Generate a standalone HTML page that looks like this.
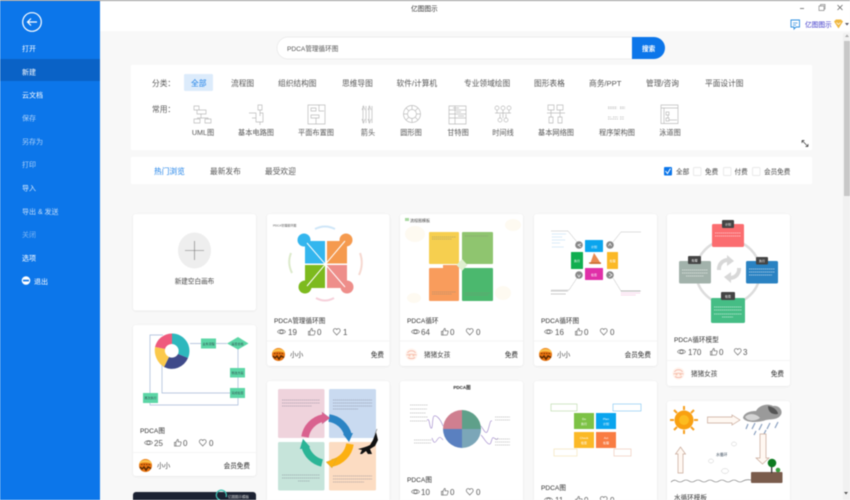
<!DOCTYPE html>
<html lang="zh"><head><meta charset="utf-8"><title>亿图图示</title>
<style>
html,body{margin:0;padding:0;width:850px;height:500px;overflow:hidden;background:#f8f8f8}
svg{display:block;position:absolute;left:0;top:0;filter:blur(.4px)}
text{font-family:"Liberation Sans","Noto Sans CJK SC",sans-serif;fill:#444;font-size:7.7px}
.s{fill:#fff;font-size:7px}.d{fill:#fff;fill-opacity:.65;font-size:7px}
.c{font-size:7.7px;fill:#555}.m{text-anchor:middle}.i{font-size:7.2px;fill:#555;text-anchor:middle}
.k{font-size:6.6px;fill:#444}.t{font-size:6.6px;fill:#333}.n{font-size:8px;fill:#555}
.f{font-size:6.6px;fill:#444}.r{font-size:6.6px;fill:#222;text-anchor:end}
.l{fill:none;stroke:#bbb;stroke-width:.7}.x{fill:#fff;font-size:3px;text-anchor:middle}
.g{fill:none;stroke:#666;stroke-width:.7}
</style></head><body>
<svg width="850" height="500" viewBox="0 0 850 500" xmlns="http://www.w3.org/2000/svg">
<defs>
<filter id="sh" x="-5%" y="-5%" width="110%" height="110%"><feDropShadow dx="0" dy=".5" stdDeviation="1" flood-color="#000" flood-opacity=".08"/></filter>
<symbol id="eye" viewBox="0 0 10 8" overflow="visible"><path class="g" d="M.5 4C2.5 1 7.5 1 9.5 4C7.5 7 2.5 7 .5 4Z"/><circle class="g" cx="5" cy="4" r="1.8"/></symbol>
<symbol id="th" viewBox="0 0 8 8" overflow="visible"><path class="g" d="M.5 3.5H2V7.5H.5ZM2 3.5L3.7.5C4.6.5 4.8 1.3 4.6 2.1L4.3 3H7C7.6 3 7.8 3.5 7.6 4L6.8 7C6.7 7.3 6.5 7.5 6.2 7.5H2"/></symbol>
<symbol id="he" viewBox="0 0 8 8" overflow="visible"><path class="g" d="M4 7.5L.9 4.2C-.4 2.7.6.6 2.2.6C3 .6 3.6 1 4 1.7C4.4 1 5 .6 5.8.6C7.4.6 8.4 2.7 7.1 4.2Z"/></symbol>
<symbol id="av1" viewBox="0 0 13 13"><circle cx="6.5" cy="6.5" r="6.5" fill="#e8730f"/><path d="M0 5C3 3 9 3 13 5L12 2.5Q6.5-1 1 2.5Z" fill="#fbc04a"/><path d="M1 8L3 10 5 8 7 11 9 8 12 9.5" stroke="#5a2a05" stroke-width="1.5" fill="none"/><path d="M2 5.5H11" stroke="#7a3505" stroke-width="1" stroke-dasharray="1.5 1"/></symbol>
<symbol id="av2" viewBox="0 0 13 13"><circle cx="6.5" cy="6.5" r="6" fill="#fff3ec"/><path d="M2.5 5C4 2 9 2 10.5 5M1.5 7C4 6 9 6 11.500 7M3 9.500C5 11 8 11 10 9.500" fill="none" stroke="#f4b0a0" stroke-width=".8"/><circle cx="4.500" cy="7.500" r="1" fill="#f8c8b0"/><circle cx="8.500" cy="7.500" r="1" fill="#f8c8b0"/></symbol>
</defs>

<rect width="850" height="500" fill="#f8f8f8"/>
<rect x="0" y="0" width="850" height="31" fill="#fff"/>
<rect x="0" y="0" width="850" height="1" fill="#999"/>
<text x="411" y="11" style="font-size:6.700px;fill:#333">亿图图示</text>
<path d="M800 8.500H804" stroke="#666" stroke-width=".8"/>
<path d="M819 6H824V10.500H819ZM820.500 6V4.500H825V9H824" fill="none" stroke="#888" stroke-width=".7"/>
<path d="M837.500 5L842.500 10M842.500 5L837.500 10" stroke="#666" stroke-width=".8"/>
<path d="M791 20H799.500V27H796L794 29V27H791Z" fill="none" stroke="#2e8fe0" stroke-width=".9"/><path d="M793 23H797.500M793 25H796" stroke="#2e8fe0" stroke-width=".7"/>
<text x="805" y="27" style="font-size:6.700px;fill:#3a35c8">亿图图示</text>
<path d="M834 21.500L836 19.500H841L843 21.500 838.500 28.500Z" fill="#f0b840"/><path d="M836.500 22.500L838.500 24.500 840.500 22.500" fill="none" stroke="#fff" stroke-width=".7"/>
<path d="M845 23H849L847 25.500Z" fill="#556"/>

<!-- sidebar -->
<rect x="0" y="0" width="100" height="500" fill="#0c76ea"/>
<rect x="0" y="0" width="100" height="1" fill="#999"/>
<rect x="0" y="59" width="100" height="22" fill="#0a62c6"/>
<circle cx="32" cy="22" r="9.300" fill="none" stroke="#fff" stroke-width="1.200"/>
<path d="M37 22H27.500M31 18.500L27.500 22 31 25.500" fill="none" stroke="#fff" stroke-width="1.200"/>
<text class="s" x="22" y="51">打开</text>
<text class="s" x="22" y="74.500">新建</text>
<text class="s" x="22" y="97.500">云文档</text>
<text class="d" x="22" y="120.500">保存</text>
<text class="d" x="22" y="144">另存为</text>
<text class="d" x="22" y="167">打印</text>
<text class="s" x="22" y="190.500" style="fill-opacity:.85">导入</text>
<text class="d" x="22" y="214" style="fill-opacity:.75">导出 &amp; 发送</text>
<text class="d" x="22" y="237" style="fill-opacity:.45">关闭</text>
<text class="s" x="22" y="260.500">选项</text>
<circle cx="26" cy="280.500" r="4.300" fill="#fff"/><rect x="23" y="279.700" width="6" height="1.700" fill="#0c76ea"/>
<text class="s" x="34" y="284">退出</text>

<!-- search -->
<path d="M288 37H632V59H288A11 11 0 0 1 288 37Z" fill="#fff" stroke="#e8e8e8" stroke-width=".7"/>
<path d="M632 37H654A11 11 0 0 1 654 59H632Z" fill="#0c76ea"/>
<text x="642" y="51" style="font-size:6.600px;fill:#fff;font-weight:bold">搜索</text>
<text x="287" y="51" style="font-size:6.600px;fill:#555">PDCA管理循环图</text>

<!-- filter panel -->
<rect x="131" y="65" width="681" height="85" fill="#fff"/>
<text class="c" x="152" y="86">分类：</text>
<rect x="184" y="74" width="29" height="17" rx="1.500" fill="#dcebfb"/>
<text class="c" x="191" y="86" style="fill:#1a7fe8">全部</text>
<text class="c" x="231" y="86">流程图</text>
<text class="c" x="278" y="86">组织结构图</text>
<text class="c" x="342" y="86">思维导图</text>
<text class="c" x="396.500" y="86">软件/计算机</text>
<text class="c" x="464" y="86">专业领域绘图</text>
<text class="c" x="534" y="86">图形表格</text>
<text class="c" x="589" y="86">商务/PPT</text>
<text class="c" x="646" y="86">管理/咨询</text>
<text class="c" x="705" y="86">平面设计图</text>
<text class="c" x="152" y="112">常用：</text>

<!-- icons -->
<g>
<path class="l" d="M194 106H199V110H194ZM197 110H206V114H197ZM201 114V118M194 119H200V123H194ZM205 119H211V123H205ZM197 118H208V119"/>
<path class="l" d="M258 105H262V110H258ZM260 110V116M249 113H256V122H263V113H260M256 118H252M260 122V125"/>
<path class="l" d="M308 105H325V124H308ZM311 108H316V111H311ZM311 115H319V118H311ZM319 105V111H324M316 118V124"/>
<path class="l" d="M363 106V123M366 106V123M369 106V123M372 106V123M362 110L363.500 106 365 110M368 110L369.500 106 371 110M362 119L363.500 123 365 119M368 119L369.500 123 371 119"/>
<circle class="l" cx="412" cy="114" r="8.500"/><circle class="l" cx="412" cy="114" r="4.500"/><path class="l" d="M412 105.500V109.500M412 118.500V122.500M403.500 114H407.500M416.500 114H420.500M406 108L409 111M415 117L418 120M418 108L415 111M409 117L406 120"/>
<path class="l" d="M449 106H466V124H449ZM449 110H466M449 114H466M449 118H466M455 106V124M453 108H459M456 112H461M458 116H464"/>
<circle class="l" cx="497" cy="108" r="2"/><circle class="l" cx="503" cy="108" r="2"/><circle class="l" cx="509" cy="108" r="2"/><circle class="l" cx="500" cy="120" r="2"/><circle class="l" cx="506" cy="120" r="2"/><path class="l" d="M495 113H511M497 110V113M503 110V118M509 110V113M500 118V114M506 118V114"/>
<path class="l" d="M548 105H554V110H548ZM557 105H563V110H557ZM551 110V113M560 110V113M547 113H565M551 113V117M560 113V117M549 117H553V123H549ZM558 117H562V123H558Z"/>
<path class="l" d="M608 107H617M608 108.500H617M620 107H625M620 108.500H625M608 117H611M613 117H618M620 117H624M608 119H618M620 119H624" stroke-dasharray="1.500 .7"/>
<path class="l" d="M661 105H678V123.500H661ZM661 108H678M664 108V123.500M666 112H669V115H666ZM666 118H669V121H666ZM669 120H677M668 115V118"/>
</g>
<text class="i" x="203" y="135">UML图</text>
<text class="i" x="256" y="135">基本电路图</text>
<text class="i" x="316" y="135">平面布置图</text>
<text class="i" x="368" y="135">箭头</text>
<text class="i" x="411" y="135">圆形图</text>
<text class="i" x="458" y="135">甘特图</text>
<text class="i" x="503" y="135">时间线</text>
<text class="i" x="556" y="135">基本网络图</text>
<text class="i" x="617" y="135">程序架构图</text>
<text class="i" x="670" y="135">泳道图</text>
<path d="M802 140.500L808 146.500M802 140.500V143M802 140.500H804.500M808 146.500V144M808 146.500H805.500" fill="none" stroke="#333" stroke-width=".7"/>

<!-- tabs panel -->
<rect x="131" y="157" width="681" height="27" fill="#fff"/>
<text class="c" x="154" y="174" style="fill:#1a7fe8">热门浏览</text>
<text class="c" x="210" y="174">最新发布</text>
<text class="c" x="265" y="174">最受欢迎</text>
<rect x="664" y="167" width="8" height="8.500" rx="1" fill="#0c76ea"/><path d="M665.500 171L667.500 173.500 670.500 168.500" fill="none" stroke="#fff" stroke-width="1"/>
<text class="k" x="676" y="174">全部</text>
<rect x="693.500" y="167.500" width="7.500" height="8" rx="1" fill="#fff" stroke="#e2e2e2" stroke-width=".7"/>
<text class="k" x="705" y="174">免费</text>
<rect x="723.500" y="167.500" width="7.500" height="8" rx="1" fill="#fff" stroke="#e2e2e2" stroke-width=".7"/>
<text class="k" x="734.500" y="174">付费</text>
<rect x="752.500" y="167.500" width="7.500" height="8" rx="1" fill="#fff" stroke="#e2e2e2" stroke-width=".7"/>
<text class="k" x="764" y="174">会员免费</text>

<!-- scrollbar -->
<rect x="843" y="33" width="7" height="467" fill="#f1f1f1"/>
<rect x="844" y="41" width="6" height="155" fill="#c8c8c8"/>
<path d="M845 37L847 34.500 849 37Z" fill="#aaa"/><path d="M844 492H848L846 494.500Z" fill="#555"/>

<!-- cards -->
<g filter="url(#sh)" fill="#fff">
<rect x="133" y="214" width="123" height="96.500" rx="3"/>
<rect x="133" y="325" width="123" height="151" rx="3"/>
<rect x="133" y="492" width="123" height="20" rx="3" fill="#1a2130"/>
<rect x="267" y="214" width="122.500" height="152" rx="3"/>
<rect x="267" y="381" width="122.500" height="130" rx="3"/>
<rect x="400" y="214" width="123" height="152" rx="3"/>
<rect x="400" y="381" width="123" height="130" rx="3"/>
<rect x="534" y="214" width="123" height="152" rx="3"/>
<rect x="534" y="381" width="123" height="130" rx="3"/>
<rect x="667" y="214" width="123" height="172" rx="3"/>
<rect x="667" y="401" width="123" height="110" rx="3"/>
</g>

<!-- new card -->
<ellipse cx="194.500" cy="250.500" rx="16.500" ry="18" fill="#eeeeee"/>
<path d="M185 250.500H204M194.500 241V260" stroke="#777" stroke-width=".6"/>
<text class="m" x="194.500" y="283.500" style="font-size:6.600px;fill:#444">新建空白画布</text>

<!-- dark card -->
<path d="M220 500A5 5 0 1 1 226 497" fill="none" stroke="#3fc0b0" stroke-width="1.300"/><text x="228" y="498" style="font-size:3.500px;fill:#ddd">亿图图示模板</text>

<!-- thumb 1 -->
<text x="273" y="226.500" style="font-size:3px;fill:#555">PDCA管理循环图</text>
<path d="M315 229Q325 224 335 229" fill="none" stroke="#cfe6f8" stroke-width="2"/>
<path d="M360 253Q364 264 359 275" fill="none" stroke="#f6d8d0" stroke-width="2"/>
<path d="M316 298Q325 303 334 298" fill="none" stroke="#f6d0da" stroke-width="2"/>
<path d="M291 253Q287 263 292 273" fill="none" stroke="#dceacb" stroke-width="2"/>
<rect x="305" y="241" width="20" height="22.500" fill="#34b6ee"/><circle cx="304" cy="240" r="6.500" fill="#34b6ee"/>
<rect x="327" y="241" width="20" height="22.500" fill="#f59a4e"/><circle cx="346" cy="240" r="6.500" fill="#f59a4e"/>
<rect x="305" y="265" width="20" height="23" fill="#7dba1e"/><circle cx="305" cy="287" r="6.500" fill="#7dba1e"/>
<rect x="327" y="265" width="20" height="23" fill="#ee8e8a"/><circle cx="347" cy="287" r="6.500" fill="#ee8e8a"/>
<path d="M307 243L345 287M345 241L307 286" stroke="#fff" stroke-width="1"/>
<text x="274" y="323" class="t">PDCA管理循环图</text>

<!-- thumb 2 -->
<text x="410" y="222" style="font-size:4px;fill:#444">流程图模板</text><rect x="405" y="218" width="4" height="3" fill="#a8d8a0"/>
<g fill="#fefaf1"><ellipse cx="415" cy="234" rx="10" ry="8"/><ellipse cx="513" cy="225" rx="8" ry="6"/><ellipse cx="503" cy="293" rx="8" ry="7"/><ellipse cx="414" cy="298" rx="7" ry="5"/></g>
<rect x="429" y="232" width="30" height="32" rx="1" fill="#f6cf4f"/>
<rect x="462" y="232" width="31" height="32" rx="1" fill="#8fc56f"/>
<rect x="429" y="268" width="30" height="33" rx="1" fill="#f99c5c"/><rect x="443" y="265" width="16" height="5" fill="#f99c5c"/>
<rect x="462" y="268" width="31" height="33" rx="1" fill="#4bb86e"/>
<path d="M462 259L467.500 265 462 271 456.500 265Z" fill="#dff0d0"/>
<path d="M432 237H456M432 239H452M465 236H488M432 292H456M432 294H452M465 293H490M465 295H488" stroke="#887" stroke-width=".4" stroke-dasharray="1.500 .5"/>
<text x="407" y="323" class="t">PDCA循环</text>

<!-- thumb 3 -->
<rect x="585" y="240" width="18" height="12" rx=".5" fill="#0aa5ee"/>
<rect x="571" y="252" width="12" height="17" rx=".5" fill="#10ae50"/>
<rect x="607" y="252" width="11" height="17" rx=".5" fill="#fbb927"/>
<rect x="585" y="268" width="18" height="12" rx=".5" fill="#e030a8"/>
<path d="M590 264L594 253 598 259 601 264Z" fill="#e98a50"/><path d="M589 263H601" stroke="#c06a30" stroke-width="1.200"/>
<g fill="#888"><circle cx="579" cy="245" r="3.800"/><circle cx="610" cy="245" r="3.800"/><circle cx="579" cy="275" r="3.800"/><circle cx="610" cy="275" r="3.800"/></g>
<path d="M581 244L578 245 581 247M608.500 246L610 243.500 611.500 246M577.500 274.500L579 277 580.500 274.500M609 273L612 275 609 277" fill="none" stroke="#fff" stroke-width=".7"/>
<path d="M577 242L568 231H551M613 242L621 232H641M577 278L569 290H551M613 278L621 291H641" fill="none" stroke="#aaa" stroke-width=".4"/>
<path d="M552 234H566M552 237H562M552 240H565M552 243H560M552 247H564" stroke="#90c4e8" stroke-width=".5" stroke-dasharray="1 .5"/>
<path d="M551 291H568M551 294H566M621 291H640" stroke="#666" stroke-width=".5" stroke-dasharray="1 .5"/><path d="M621 293H640M621 295H636" stroke="#eb90c8" stroke-width=".5" stroke-dasharray="1 .5"/>
<text x="594" y="248" class="x">计划</text><text x="577" y="262" class="x">执行</text><text x="612.500" y="262" class="x">处理</text><text x="594" y="276" class="x">检查</text>
<text x="541" y="323" class="t">PDCA循环图</text>

<!-- thumb 4 -->
<circle cx="728" cy="272" r="32" fill="none" stroke="#dcdcdc" stroke-width="2.500"/>
<rect x="712" y="224" width="32" height="23" rx="1.500" fill="#fb6d70"/>
<rect x="746" y="261" width="32" height="22.500" rx="1.500" fill="#2a82c2"/>
<rect x="711" y="298" width="34" height="25" rx="1.500" fill="#45bd85"/>
<rect x="679" y="261" width="32" height="22.500" rx="1.500" fill="#a2b2ab"/>
<g stroke="#fff" stroke-width=".5" stroke-dasharray="1.500 .5"><path d="M715 233H741M715 236H741"/><path d="M749 269H775M749 272H775M749 275H772"/><path d="M714 307H742M714 310H742M714 314H742M722 317H733"/><path d="M682 270H708M682 273H708M686 276H704"/></g>
<g fill="#444"><rect x="722" y="220" width="12" height="8" rx="1"/><rect x="756" y="257" width="12" height="7.500" rx="1"/><rect x="721" y="292" width="14" height="8" rx="1"/><rect x="688" y="256" width="13" height="8" rx="1"/></g>
<text class="x" x="728" y="225.500">计划</text><text class="x" x="762" y="262">执行</text><text class="x" x="728" y="297.500">检查</text><text class="x" x="694.500" y="261.500">处理</text>
<path d="M717 270A11 11 0 0 1 727 258L727 255 734 261 727 266 727 262A7 7 0 0 0 721 270ZM741 268A11 11 0 0 1 731 280L731 283 724 277 731 272 731 276A7 7 0 0 0 737 268Z" fill="#d8d8d8"/>
<text x="674" y="342" class="t">PDCA循环模型</text>

<!-- thumb 5: flow -->
<path d="M172 333.500A17.500 17.500 0 0 0 155 347L165 349A7 7 0 0 1 172 344Z" fill="#ef5a7d"/>
<path d="M172 333.500A17.500 17.500 0 0 1 188 358L178 354A7 7 0 0 0 172 344Z" fill="#2eb8bd"/>
<path d="M188 358A17.500 17.500 0 0 1 164 367L169 357A7 7 0 0 0 178 354Z" fill="#3f4a8a"/>
<path d="M155 347A20 20 0 0 0 164 367L169 357A7 7 0 0 1 165 349Z" fill="#fbc94b"/>
<path d="M190 343.500H201M216 343.500H227M238 349V368M238 377V388M230 393H162V365M150 393V335H163M150 403V405H238V398" fill="none" stroke="#a4b8d8" stroke-width=".7"/>
<g fill="#5cd6a6"><rect x="201" y="338.500" width="15" height="10"/><path d="M227 343.500L238 337 248.500 343.500 238 349.500Z"/><rect x="230" y="368" width="15" height="9.500"/><rect x="230" y="388" width="15" height="10"/><rect x="143" y="393" width="15" height="10"/></g>
<text x="208.500" y="345" class="x" style="fill:#355">业务流程</text><text x="237.500" y="345" class="x" style="fill:#355">是否合格</text>
<text x="237.500" y="374" class="x" style="fill:#355">整改方案</text><text x="237.500" y="394" class="x" style="fill:#355">完成检查</text><text x="150.500" y="399" class="x" style="fill:#355">再次执行</text>
<text x="140" y="433" class="t">PDCA图</text>

<!-- thumb 6 -->
<rect x="278" y="389" width="46.500" height="49" rx="1.500" fill="#efd3dc"/>
<rect x="329" y="389" width="47" height="49" rx="1.500" fill="#c9daf0"/>
<rect x="278" y="442" width="46.500" height="48.500" rx="1.500" fill="#c6e4da"/>
<rect x="329" y="442" width="47" height="48.500" rx="1.500" fill="#fcdcc2"/>
<g fill="none" stroke-width="7.500"><path d="M329 418A23 23 0 0 1 348 435" stroke="#2b84c4"/><path d="M350 444A23 23 0 0 1 332 463" stroke="#fcb010"/><path d="M322 463A23 23 0 0 1 305 446" stroke="#2cb596"/><path d="M305 437A23 23 0 0 1 323 418" stroke="#d9628f"/></g>
<path d="M343 434L353 433 349 442ZM337 458L332 468 326 462ZM300 449L310 447 303 439ZM322 412L330 418 322 424Z" fill="#2b84c4"/>
<path d="M337 458L332 468 326 462Z" fill="#fcb010"/><path d="M300 449L310 447 303 439Z" fill="#2cb596"/><path d="M322 412L330 418 322 424Z" fill="#d9628f"/>
<path d="M358 449C362 448 366 447 370 445L373 440 376 432 378 440 375 446 370 449 372 454H368L366 451 362 454H360L362 450Z" fill="#111"/><path d="M375 434L377 429" stroke="#888" stroke-width=".8"/>
<path d="M282 400H320M282 403H320M282 406H312M333 400H372M333 403H372M333 406H372M333 409H358M282 475H320M282 478H320M298 481H310M333 476H372M333 479H372M333 482H364" stroke="#778" stroke-width=".4" stroke-dasharray="1.500 .5"/>

<!-- thumb 7 -->
<text class="m" x="462" y="389" style="font-size:4.500px;fill:#222;font-weight:bold">PDCA图</text>
<path d="M462 429V410A19 19 0 0 0 443 429Z" fill="#cf7f90"/>
<path d="M462 429V410A19 19 0 0 1 481 429Z" fill="#5fa08a"/>
<path d="M462 429H443A19 19 0 0 0 462 448Z" fill="#5a80c0"/>
<path d="M462 429H481A19 19 0 0 1 462 448Z" fill="#7ba6b8"/>
<path d="M443 426C440 418 436 415 434 416S433 430 431 428 430 418 427 420M481 426C484 430 486 436 488 430S490 420 492 421M443 440C440 436 439 437 437 440S434 444 432 438M481 435C484 438 486 443 489 444S491 436 494 438 497 440 498 438" fill="none" stroke="#9a80c8" stroke-width=".6"/>
<path d="M410 405H428M410 409H427M410 413H426M410 417H428M410 421H427M414 440H432M414 443H431M495 417H510M495 420H510M495 439H510M495 442H510M495 445H510" stroke="#888" stroke-width=".4" stroke-dasharray="1.500 .5"/>
<text x="407" y="482" class="t">PDCA图</text>

<!-- thumb 8 -->
<rect x="574" y="413" width="20" height="16" fill="#7dc246"/>
<rect x="596" y="413" width="20" height="16" fill="#0aa5ee"/>
<rect x="574" y="432" width="20" height="16" fill="#fbb927"/>
<rect x="596" y="432" width="20" height="16" fill="#f97c42"/>
<rect x="551" y="404" width="26" height="7" fill="#fff" stroke="#a8d090" stroke-width=".5"/>
<rect x="613" y="404" width="28" height="7" fill="#fff" stroke="#60b8ee" stroke-width=".5"/>
<rect x="554" y="449" width="23" height="7" fill="#fff" stroke="#f0dca0" stroke-width=".5"/>
<rect x="614" y="449" width="17" height="7" fill="#fff" stroke="#e8b8a0" stroke-width=".5"/>
<text class="x" x="584" y="420">Do</text><text class="x" x="584" y="425">执行</text><text class="x" x="606" y="420">Plan</text><text class="x" x="606" y="425">计划</text><text class="x" x="584" y="439">Check</text><text class="x" x="584" y="444">检查</text><text class="x" x="606" y="439">Act</text><text class="x" x="606" y="444">处理</text>
<text x="541" y="490" class="t">PDCA图</text>

<!-- thumb 9 -->
<g stroke="#f7a020" stroke-width="2"><path d="M684 406V410M684 430V434M670 420H674M694 420H698M674 410L677 413M694 410L691 413M674 430L677 427M694 430L691 427"/></g>
<circle cx="684" cy="420" r="9.500" fill="#f9a010"/><circle cx="684" cy="420" r="5" fill="#fcbc20"/>
<path d="M707.500 417H732V415L740 420 732 425V423H707.500Z" fill="#fff8f2" stroke="#c8a898" stroke-width=".7"/>
<path d="M743 418C744 412 752 411 756 411C759 405 768 403 773 406C780 405 784 412 780 416C777 420 770 419 766 420C758 423 746 423 743 418Z" fill="#9a9a9a"/><path d="M745 417C748 413 756 413 760 418 756 421 748 422 745 417Z" fill="#d4d4d4"/><path d="M768 406C774 407 778 411 778 414 772 415 768 412 768 406Z" fill="#555"/>
<path d="M748 424L746 429M755 423L752 429M762 424L759 430M770 423L767 429M778 422L775 428M756 431L754 435M766 430L764 434" stroke="#8aa0c0" stroke-width="1.200"/>
<path d="M760 434H766V458H769L762.500 464 756 458H760Z" fill="#fff8f2" stroke="#c8a898" stroke-width=".7"/>
<path d="M678 473V454H675.500L680.500 447 685.500 454H683V473Z" fill="#fff8f2" stroke="#c8a898" stroke-width=".7"/>
<path d="M671 482Q674 479 677 481T683 481 689 481 695 481 701 481 707 481 713 481 719 481 725 481 731 481 737 481 743 481 751 480" fill="none" stroke="#666" stroke-width=".6"/>
<rect x="751" y="472" width="31.500" height="11" rx="1" fill="#7a5c4c"/>
<rect x="771" y="466" width="1.300" height="7" fill="#333"/><circle cx="772" cy="463" r="4.300" fill="#0d7a20"/><circle cx="778" cy="470" r="2.300" fill="#3aa040"/>
<ellipse cx="734" cy="444" rx="2.500" ry="2" fill="none" stroke="#ccc" stroke-width=".5"/><ellipse cx="711" cy="461" rx="2.500" ry="2" fill="none" stroke="#ccc" stroke-width=".5"/><ellipse cx="725" cy="471" rx="3.500" ry="2.500" fill="none" stroke="#ccc" stroke-width=".5"/>
<text x="716" y="456" style="font-size:3.800px;fill:#345">水循环</text>
<text x="674" y="500" class="t" style="fill:#333">水循环模板</text>

<!-- card footers -->
<path d="M267 341H389.500M400 341H523M534 341H657M667 360.500H790M133 452.500H256" stroke="#f2f2f2" stroke-width=".8"/>

<!-- stats -->
<use href="#eye" x="277" y="328" width="9" height="7.500"/><text class="n" x="288" y="335">19</text>
<use href="#th" x="308" y="328" width="7.500" height="7.500"/><text class="n" x="317" y="335">0</text>
<use href="#he" x="333" y="328" width="7.500" height="7.500"/><text class="n" x="343" y="335">1</text>
<use href="#av1" x="272" y="348" width="13" height="13"/><text class="f" x="290" y="357">小小</text><text class="r" x="384" y="357">免费</text>

<use href="#eye" x="411" y="328" width="9" height="7.500"/><text class="n" x="421" y="335">64</text>
<use href="#th" x="441" y="328" width="7.500" height="7.500"/><text class="n" x="450" y="335">0</text>
<use href="#he" x="466" y="328" width="7.500" height="7.500"/><text class="n" x="476" y="335">0</text>
<use href="#av2" x="405" y="348" width="13" height="13"/><text class="f" x="424" y="357">猪猪女孩</text><text class="r" x="518" y="357">免费</text>

<use href="#eye" x="544" y="328" width="9" height="7.500"/><text class="n" x="555" y="335">16</text>
<use href="#th" x="575" y="328" width="7.500" height="7.500"/><text class="n" x="584" y="335">0</text>
<use href="#he" x="600" y="328" width="7.500" height="7.500"/><text class="n" x="610" y="335">0</text>
<use href="#av1" x="539" y="348" width="13" height="13"/><text class="f" x="557" y="357">小小</text><text class="r" x="651" y="357">会员免费</text>

<use href="#eye" x="677" y="348" width="9" height="7.500"/><text class="n" x="688" y="355">170</text>
<use href="#th" x="710" y="348" width="7.500" height="7.500"/><text class="n" x="719" y="355">0</text>
<use href="#he" x="734" y="348" width="7.500" height="7.500"/><text class="n" x="743" y="355">3</text>
<use href="#av2" x="672" y="367" width="13" height="13"/><text class="f" x="691" y="376">猪猪女孩</text><text class="r" x="784" y="376">免费</text>

<use href="#eye" x="144" y="439" width="9" height="7.500"/><text class="n" x="154" y="446">25</text>
<use href="#th" x="174" y="439" width="7.500" height="7.500"/><text class="n" x="183" y="446">0</text>
<use href="#he" x="199" y="439" width="7.500" height="7.500"/><text class="n" x="209" y="446">0</text>
<use href="#av1" x="139" y="459" width="13" height="13"/><text class="f" x="157" y="468">小小</text><text class="r" x="250" y="468">会员免费</text>

<use href="#eye" x="411" y="488" width="9" height="7.500"/><text class="n" x="421" y="495">10</text>
<use href="#th" x="441" y="488" width="7.500" height="7.500"/><text class="n" x="450" y="495">0</text>
<use href="#he" x="466" y="488" width="7.500" height="7.500"/><text class="n" x="476" y="495">0</text>

<use href="#eye" x="544" y="496" width="9" height="7.500"/><text class="n" x="555" y="503">11</text>
<use href="#th" x="575" y="496" width="7.500" height="7.500"/><text class="n" x="584" y="503">0</text>
<use href="#he" x="600" y="496" width="7.500" height="7.500"/><text class="n" x="610" y="503">0</text>
</svg>
</body></html>
